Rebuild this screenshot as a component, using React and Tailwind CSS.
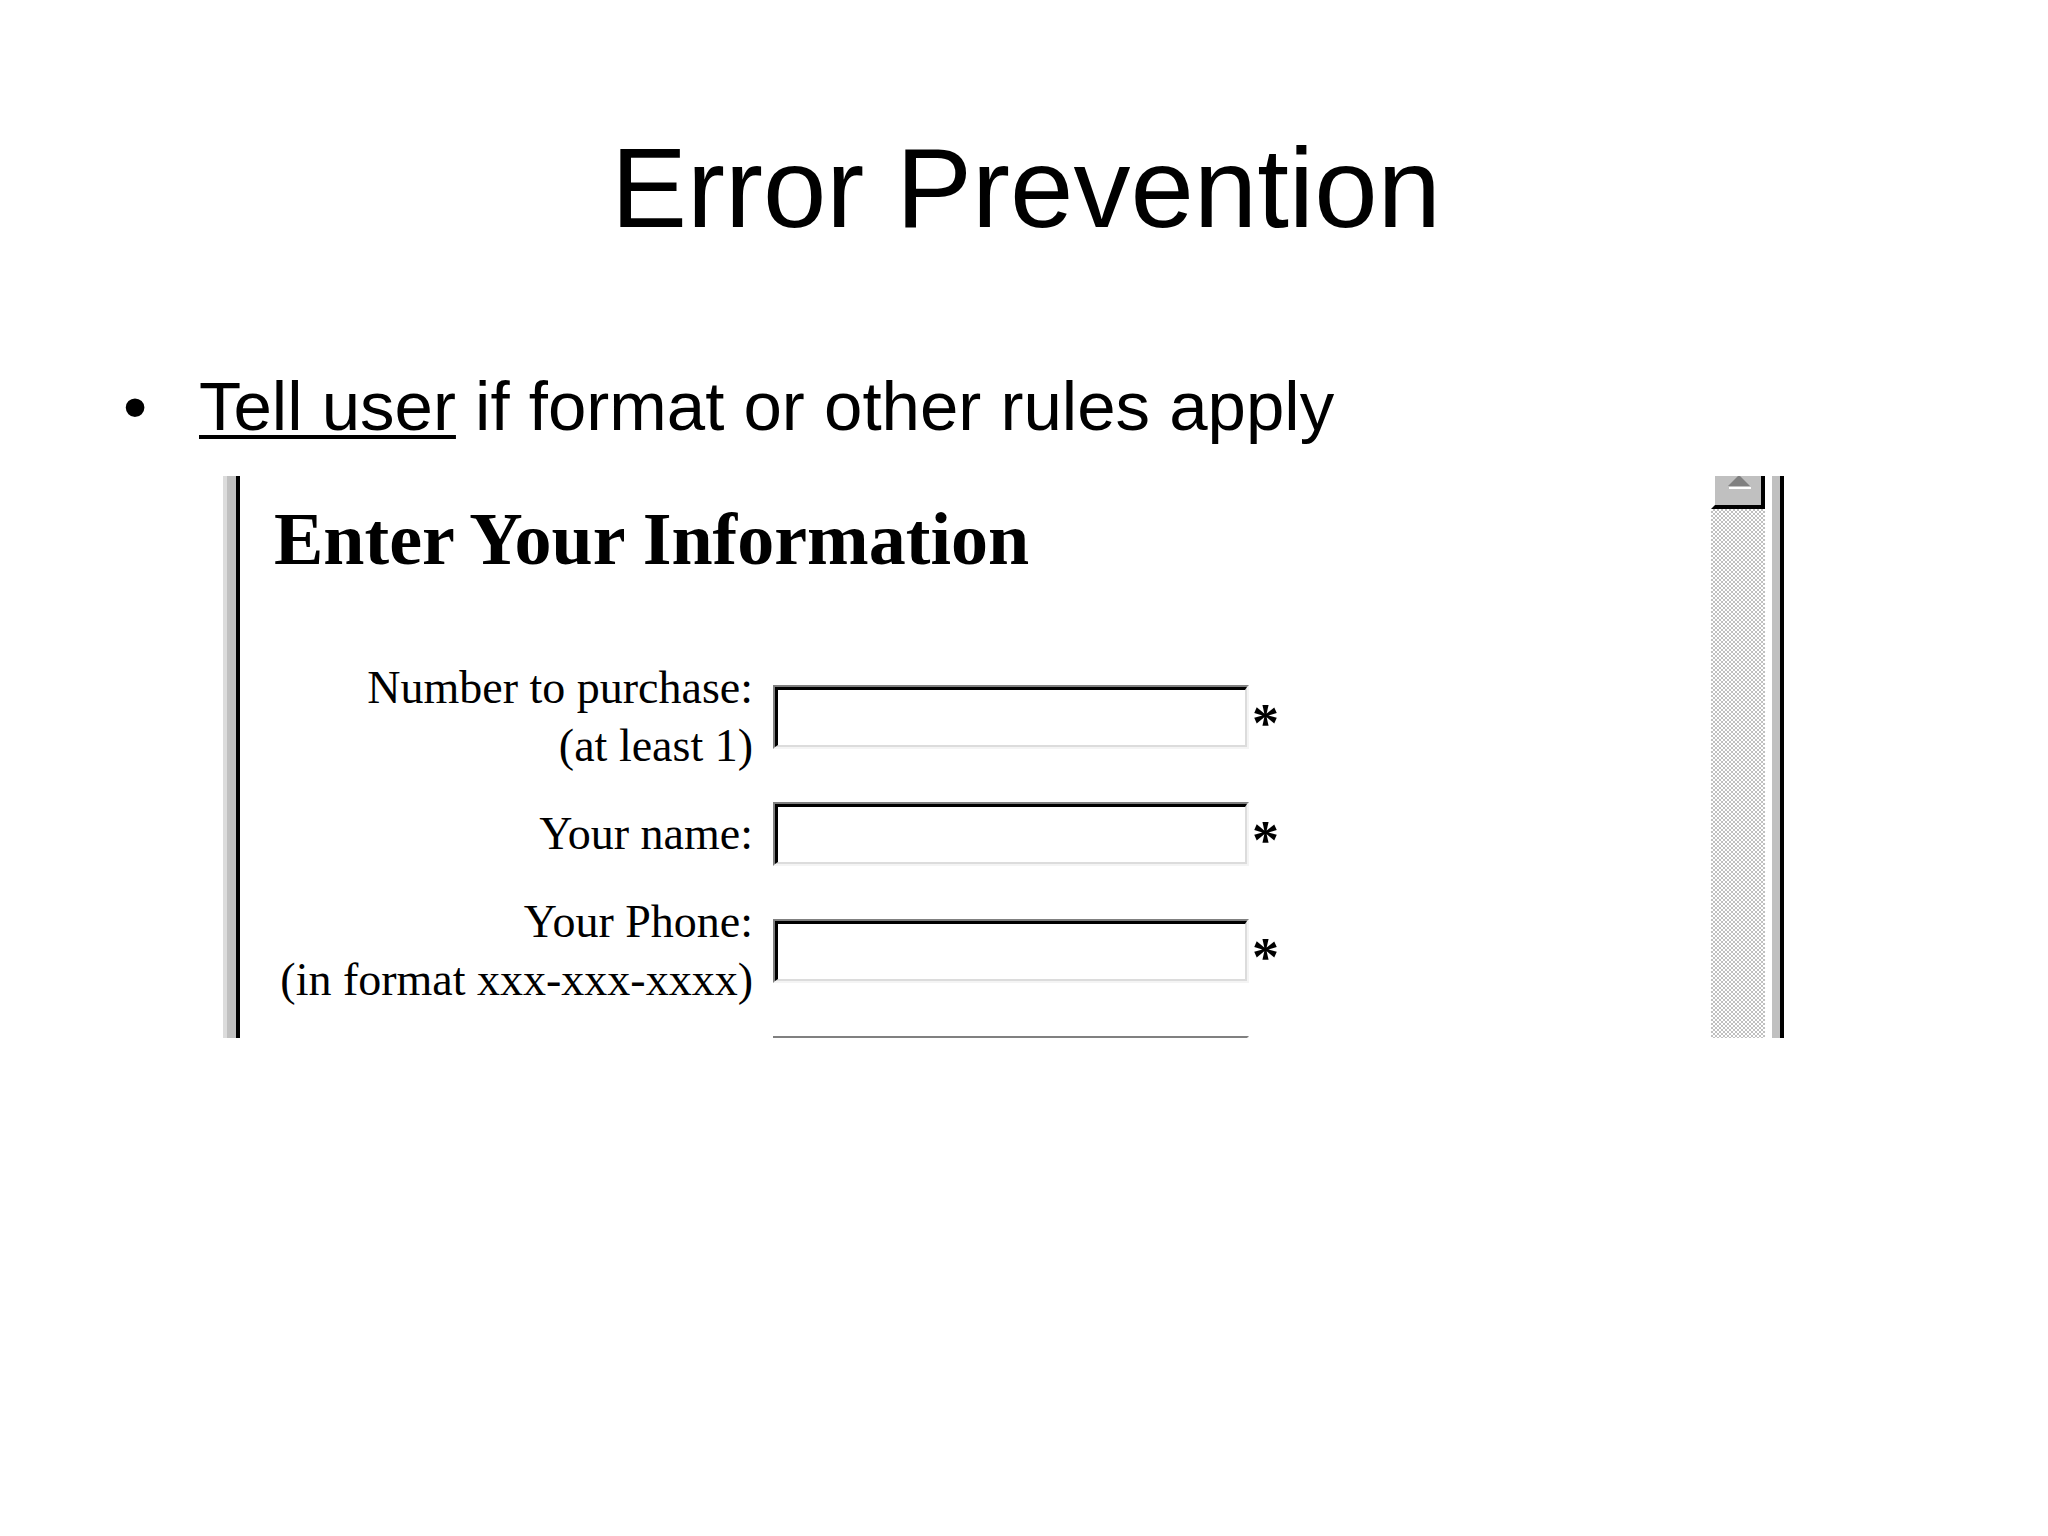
import React from "react";

const serif = { fontFamily: '"Liberation Serif", "Times New Roman", serif' };

function Field() {
  return (
    <div className="w-[476px] h-[64px] shrink-0 border-t-2 border-l-2 border-t-[#808080] border-l-[#808080] border-b-2 border-r-2 border-b-[#f4f4f4] border-r-[#f4f4f4]">
      <div className="w-full h-full bg-white border-t-[3px] border-l-[3px] border-t-black border-l-black border-b-2 border-r-2 border-b-[#dcdcdc] border-r-[#dcdcdc]" />
    </div>
  );
}

function Row({ lines, last }) {
  return (
    <div className="h-[117px] flex items-center shrink-0">
      <div className="w-[479px] text-right text-[46px] leading-[58px] text-black" style={serif}>
        {lines.map((l, i) => (
          <div key={i} className="whitespace-nowrap">{l}</div>
        ))}
      </div>
      <div className="ml-[20px] flex items-center">
        <Field />
        {!last && (
          <span className="ml-[3px] mt-[12px] text-[54px] leading-none font-bold" style={serif}>
            *
          </span>
        )}
      </div>
    </div>
  );
}

export default function App() {
  return (
    <div className="w-[2048px] h-[1536px] bg-white overflow-hidden flex flex-col">
      <h1
        className="mt-[131px] pl-[4px] text-center text-[114px] leading-none font-normal text-black whitespace-nowrap"
        style={{ fontFamily: '"Liberation Sans", Arial, sans-serif' }}
      >
        Error Prevention
      </h1>

      <div
        className="mt-[127px] pl-[123px] flex text-[69px] leading-none text-black whitespace-nowrap"
        style={{ fontFamily: '"Liberation Sans", Arial, sans-serif' }}
      >
        <span className="w-[76px]">•</span>
        <span>
          <span className="underline decoration-[4px] underline-offset-[5px]">Tell user</span> if format or other rules apply
        </span>
      </div>

      <div className="ml-[223px] mt-[35px] w-[1561px] h-[562px] flex overflow-hidden shrink-0">
        <div className="w-[4px] bg-[#dcdcdc]" />
        <div className="w-[9px] bg-[#c0c0c0]" />
        <div className="w-[4px] bg-black" />

        <div className="flex-1 bg-white pl-[34px] pt-[26px] flex flex-col">
          <h2 className="text-[74px] leading-none font-bold text-black whitespace-nowrap" style={serif}>
            Enter Your Information
          </h2>
          <div className="mt-[82px] flex flex-col">
            <Row lines={["Number to purchase:", "(at least 1)"]} />
            <Row lines={["Your name:"]} />
            <Row lines={["Your Phone:", "(in format xxx-xxx-xxxx)"]} />
            <Row lines={[]} last />
          </div>
        </div>

        <div className="w-[54px] flex flex-col">
          <div className="h-[33px] shrink-0 bg-[#c0c0c0] border-l-4 border-l-white border-r-4 border-r-black border-b-4 border-b-black flex justify-center items-start">
            <svg width="46" height="14" viewBox="0 0 46 14">
              <polygon points="24,-1 35,10 13,10" fill="#808080" />
              <rect x="14" y="11" width="22" height="2" fill="#ffffff" />
            </svg>
          </div>
          <div className="flex-1 [background-image:repeating-conic-gradient(#c0c0c0_0%_25%,#ffffff_0%_50%)] [background-size:4px_4px]" />
        </div>
        <div className="w-[7px] bg-white" />
        <div className="w-[8px] bg-[#c0c0c0]" />
        <div className="w-[4px] bg-black" />
      </div>
    </div>
  );
}
